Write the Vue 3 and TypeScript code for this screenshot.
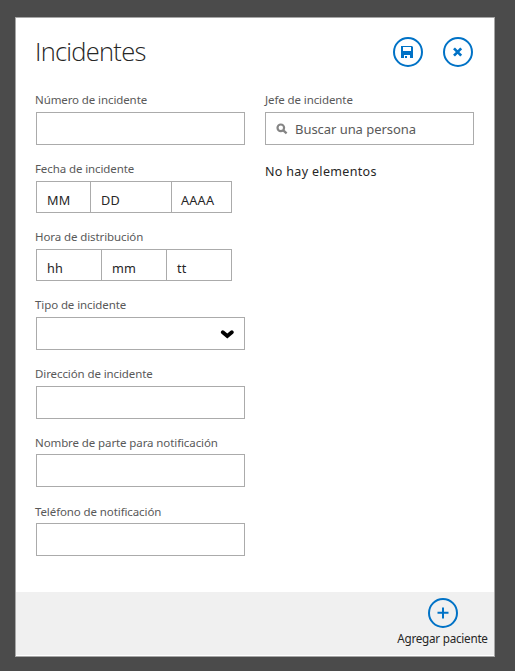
<script setup lang="ts">
import { ref } from 'vue'

interface Part { hint: string; cls: string }
interface Field { id: string; label: string; kind: 'text' | 'parts' | 'select'; parts?: Part[] }

const fields = ref<Field[]>([
  { id: 'numero', label: 'Número de incidente', kind: 'text' },
  {
    id: 'fecha', label: 'Fecha de incidente', kind: 'parts',
    parts: [{ hint: 'MM', cls: 'month' }, { hint: 'DD', cls: 'day' }, { hint: 'AAAA', cls: 'year' }],
  },
  {
    id: 'hora', label: 'Hora de distribución', kind: 'parts',
    parts: [{ hint: 'hh', cls: 'hour' }, { hint: 'mm', cls: 'minute' }, { hint: 'tt', cls: 'meridiem' }],
  },
  { id: 'tipo', label: 'Tipo de incidente', kind: 'select' },
  { id: 'direccion', label: 'Dirección de incidente', kind: 'text' },
  { id: 'nombre', label: 'Nombre de parte para notificación', kind: 'text' },
  { id: 'telefono', label: 'Teléfono de notificación', kind: 'text' },
])
</script>

<template>
  <div class="backdrop">
    <section class="panel">
      <header class="header">
        <h1 class="title">Incidentes</h1>
        <div class="actions">
          <button class="round" type="button">
            <svg width="30" height="30" viewBox="0 0 30 30">
              <circle cx="15" cy="15" r="14" fill="none" stroke="#0072c6" stroke-width="2" />
              <path fill="#0072c6" fill-rule="evenodd" d="M8 9h11l1 1v11h-3v-3h-6v3H8zM10 10v4h8v-4zM12 19h2v2h-2z" />
            </svg>
          </button>
          <button class="round" type="button">
            <svg width="30" height="30" viewBox="0 0 30 30">
              <circle cx="15" cy="15" r="14" fill="none" stroke="#0072c6" stroke-width="2" />
              <path d="M11 11.4l7.2 7.2M18.2 11.4L11 18.6" fill="none" stroke="#0072c6" stroke-width="2.7" />
            </svg>
          </button>
        </div>
      </header>

      <div class="body">
        <div class="column main">
          <div v-for="f in fields" :key="f.id" class="field">
            <label class="label" :class="f.id">{{ f.label }}</label>
            <div v-if="f.kind === 'parts'" class="parts">
              <span v-for="p in f.parts" :key="p.hint" class="part" :class="p.cls">{{ p.hint }}</span>
            </div>
            <div v-else class="box" :class="{ select: f.kind === 'select' }">
              <svg v-if="f.kind === 'select'" width="14" height="10" viewBox="0 0 14 10">
                <path d="M2.8 3.3L7.3 7L11.8 3.3" fill="none" stroke="#000" stroke-width="3.8" stroke-linecap="round" />
              </svg>
            </div>
          </div>
        </div>

        <div class="column side">
          <label class="label">Jefe de incidente</label>
          <div class="box search">
            <svg width="12" height="12" viewBox="0 0 12 12">
              <circle cx="4.8" cy="4.8" r="3.3" fill="none" stroke="#858585" stroke-width="2.2" />
              <path d="M7.3 7.3L10.6 10.4" stroke="#858585" stroke-width="2.3" />
            </svg>
            <span class="placeholder">Buscar una persona</span>
          </div>
          <p class="empty">No hay elementos</p>
        </div>
      </div>

      <footer class="footer">
        <button class="add" type="button">
          <svg width="30" height="30" viewBox="0 0 30 30">
            <circle cx="15" cy="15" r="14" fill="none" stroke="#0072c6" stroke-width="2" />
            <path d="M15 9.5v11M9.5 14.8h11" fill="none" stroke="#0072c6" stroke-width="2" />
          </svg>
          <span class="add-text">Agregar paciente</span>
        </button>
      </footer>
    </section>
  </div>
</template>

<style>
body { background: #4b4b4b; }
</style>

<style scoped>
* { box-sizing: border-box; }
.backdrop {
  width: 515px;
  height: 671px;
  padding: 17px 20px 14px 15px;
  background: #4b4b4b;
  font-family: "Noto Sans", "Open Sans", sans-serif;
  color: #262626;
  overflow: hidden;
}
.panel {
  display: flex;
  flex-direction: column;
  width: 480px;
  height: 640px;
  background: #fff;
  border: 1px solid #a6a6a6;
}
.header {
  display: flex;
  justify-content: space-between;
  height: 74px;
  padding: 19px 21px 0 19px;
}
.title {
  margin: 0;
  font-family: "Open Sans", "Noto Sans", sans-serif;
  font-size: 25.5px;
  font-weight: 300;
  line-height: 29px;
  letter-spacing: -0.75px;
  white-space: nowrap;
}
.actions { display: flex; gap: 20px; height: 30px; }
button { border: 0; padding: 0; background: none; font: inherit; color: inherit; }
.round { width: 30px; height: 30px; }
svg { display: block; flex: none; }
.body { display: flex; gap: 20px; flex: 1; padding-left: 20px; }
.column { width: 209px; }
.main { display: grid; grid-template-rows: 69px 68px 68px 69px 68px 69px 64px; align-content: start; }
.label {
  display: block;
  height: 20px;
  margin-left: -1px;
  font-size: 11.5px;
  line-height: 16px;
  letter-spacing: -0.1px;
  color: #595959;
  white-space: nowrap;
}
.nombre, .telefono { line-height: 18px; }
.box { height: 33px; border: 1px solid #ababab; }
.select { display: flex; justify-content: flex-end; align-items: center; padding-right: 10px; }
.parts { display: flex; width: 196px; height: 32px; border: 1px solid #ababab; }
.part {
  padding: 9px 0 0 10px;
  font-size: 12.7px;
  line-height: 18px;
  letter-spacing: 0.2px;
  border-right: 1px solid #ababab;
}
.part:last-child { flex: 1; border-right: 0; }
.month { width: 54px; }
.day { width: 81px; }
.part.year { padding-left: 9px; }
.hour, .minute { width: 65px; }
.search { display: flex; align-items: center; gap: 7px; padding-left: 10px; }
.placeholder { font-size: 13px; letter-spacing: -0.05px; color: #595959; white-space: nowrap; }
.side .label { margin-left: 0; }
.empty { margin: 18px 0 0; font-size: 12.5px; line-height: 18px; letter-spacing: 0.33px; white-space: nowrap; }
.footer {
  display: flex;
  justify-content: flex-end;
  height: 64px;
  padding: 6px 6px 0 0;
  background: #f0f0f0;
  border-bottom: 1px solid #fff;
}
.add { display: flex; flex-direction: column; align-items: center; width: 91px; }
.add-text { font-size: 11.7px; line-height: 18px; letter-spacing: -0.25px; margin-top: 1px; white-space: nowrap; }
</style>
